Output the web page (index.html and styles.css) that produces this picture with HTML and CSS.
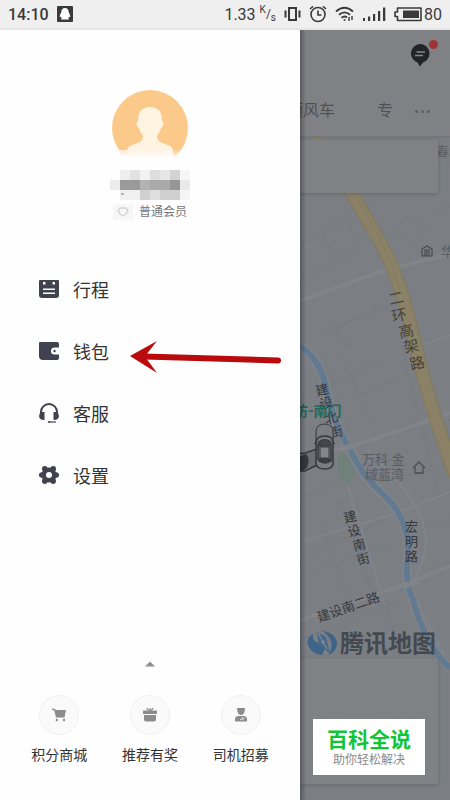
FILE: index.html
```html
<!DOCTYPE html>
<html lang="zh-CN">

<head>
  <meta charset="UTF-8">
  <meta name="viewport" content="width=device-width, initial-scale=1.0">
  <title>个人中心</title>
  <link rel="stylesheet" href="styles.css">
</head>

<body>
  <header class="status-bar">
    <div class="status-group">
      <span class="clock">14:10</span>
      <svg class="qq-icon" width="16" height="16" viewBox="0 0 16 16">
        <rect width="16" height="16" rx="1" fill="#3a3a3a" />
        <path d="M8 2C5.500 2 4.300 3.800 4.300 6.200C3.600 7.600 2.600 9.400 2.800 11.300L4 10.800L4.600 12.200L3.800 13.500H12.200L11.400 12.200L12 10.800L13.200 11.300C13.400 9.400 12.400 7.600 11.700 6.200C11.700 3.800 10.500 2 8 2Z" fill="#fff" />
      </svg>
    </div>
    <div class="status-group">
      <span class="speed">1.33<span class="speed-unit"><sup>K</sup>/<sub>s</sub></span></span>
      <svg width="17" height="16" viewBox="0 0 17 16" fill="none" stroke="#3a3a3a" stroke-width="2">
        <path d="M5 2H12V14H5ZM1.500 4.500V11.500M15.500 4.500V11.500" />
      </svg>
      <svg width="18" height="18" viewBox="0 0 18 18" fill="none" stroke="#3a3a3a" stroke-width="1.600">
        <circle cx="9" cy="9.500" r="7" />
        <path d="M9 5.500V10H12.500M1 4L4 1.300M17 4L14 1.300" />
      </svg>
      <svg width="20" height="18" viewBox="0 0 20 18" fill="none" stroke="#3a3a3a" stroke-width="1.800">
        <path d="M1 6.500Q9.500 -1 18 6.500M4 9.800Q9.500 5 15 9.800M6.500 12.800Q9.500 10.400 12 12.500" />
        <circle cx="9.500" cy="15" r="1" fill="#3a3a3a" stroke="none" />
        <path d="M14 12V16M17 11V15" stroke-width="1.400" />
      </svg>
      <svg width="23" height="16" viewBox="0 0 23 16" fill="#3a3a3a">
        <path d="M0 12H2V15H0ZM5 10.500H7.200V15H5ZM10 8H12.200V15H10ZM15 5H17.200V15H15ZM20 1.500H22.300V15H20Z" />
      </svg>
      <span class="battery">
        <svg width="28" height="16" viewBox="0 0 28 16">
          <path d="M3.500 2H27V14.500H3.500V10.500H1V6H3.500Z" fill="none" stroke="#3a3a3a" stroke-width="1.600" stroke-linejoin="round" />
          <rect x="9" y="4.500" width="16" height="7.500" fill="#3a3a3a" />
        </svg>
        80
      </span>
    </div>
  </header>

  <div class="screen">
    <aside class="drawer">
      <section class="profile">
        <svg class="avatar" viewBox="0 0 76 76">
          <defs>
            <linearGradient id="fade" x1="0" y1="0" x2="0" y2="1">
              <stop offset="0" stop-color="#fefefe" stop-opacity="0" />
              <stop offset="0.500" stop-color="#fefefe" stop-opacity="1" />
            </linearGradient>
          </defs>
          <circle cx="38" cy="38" r="38" fill="#fbca8b" />
          <path d="M38 17C30 17 26 22 26 29V31C24 31 24 36 27 38C28 42 30 44 31 46C31 52 26 53 20 55C17 56 15 58 15 61L15 76H61V61C61 58 59 56 56 55C50 53 45 52 45 46C46 44 48 42 49 38C52 36 52 31 50 31V29C50 22 46 17 38 17Z" fill="#fff3e2" />
          <path d="M8 60H15V66H8Z" fill="#fdebd4" />
          <rect y="60" width="76" height="16" fill="url(#fade)" />
        </svg>
        <svg class="masked-name" viewBox="0 0 80 30">
          <rect x="10" y="0" width="10" height="10" fill="#eeeeef" />
          <rect x="20" y="0" width="10" height="10" fill="#e2e2e3" />
          <rect x="30" y="0" width="10" height="10" fill="#f2f2f2" />
          <rect x="40" y="0" width="10" height="10" fill="#dededf" />
          <rect x="50" y="0" width="10" height="10" fill="#e7e7e8" />
          <rect x="60" y="0" width="10" height="10" fill="#d3d3d4" />
          <rect x="70" y="0" width="10" height="10" fill="#f6f6f6" />
          <rect x="0" y="10" width="10" height="10" fill="#ececec" />
          <rect x="10" y="10" width="20" height="10" fill="#9a9a9b" />
          <rect x="30" y="10" width="10" height="10" fill="#b3b3b4" />
          <rect x="40" y="10" width="20" height="10" fill="#aaaaab" />
          <rect x="60" y="10" width="10" height="10" fill="#969697" />
          <rect x="70" y="10" width="10" height="10" fill="#e9e9ea" />
          <rect x="10" y="20" width="20" height="10" fill="#f0f0f0" />
          <path d="M11 23H14V25H11Z" fill="#b5b5b5" />
          <rect x="30" y="20" width="10" height="10" fill="#d0d0d1" />
          <rect x="40" y="20" width="10" height="10" fill="#dedede" />
          <rect x="50" y="20" width="20" height="10" fill="#cfcfd0" />
          <rect x="70" y="20" width="10" height="10" fill="#f5f5f5" />
        </svg>
        <div class="member">
          <span class="member-badge">
            <svg width="12" height="10" viewBox="0 0 12 10" fill="none" stroke="#d4d4d4" stroke-width="1.500">
              <path d="M3 1H9L11 4L9 7L6 9L3 7L1 4Z" stroke-linejoin="round" />
            </svg>
          </span>
          <span>普通会员</span>
        </div>
      </section>

      <nav class="menu">
        <a class="menu-item" href="#trips">
          <svg class="menu-icon" viewBox="0 0 20 20">
            <path d="M0 2Q0 1 1 1H19Q20 1 20 2V16Q20 19 17 19H3Q0 19 0 16Z" fill="#41414f" />
            <path d="M4 3H6.500V5.500H4ZM13.500 3H16V5.500H13.500ZM4 9.500H16V11H4ZM4 13.500H16V15H4Z" fill="#fff" />
          </svg>
          行程
        </a>
        <a class="menu-item" href="#wallet">
          <svg class="menu-icon" viewBox="0 0 20 20">
            <path d="M1 1H18Q20 1 20 3V6.500H15.500A3.500 3.500 0 0 0 15.500 13.500H20V17Q20 19 18 19H4Q0 19 0 15V2Q0 1 1 1Z" fill="#41414f" />
            <circle cx="15.500" cy="10" r="1.200" fill="#41414f" />
          </svg>
          钱包
        </a>
        <a class="menu-item" href="#service">
          <svg class="menu-icon" viewBox="0 0 20 20">
            <path d="M2 11V9A8 8 0 0 1 18 9V11" fill="none" stroke="#41414f" stroke-width="2" />
            <path d="M1.500 9H5.500V17Q2 17.500 .5 15Q-.5 12 1.500 9ZM18.500 9H14.500V17Q18 17.500 19.500 15Q20.500 12 18.500 9Z" fill="#41414f" />
            <path d="M10 19H17" stroke="#41414f" stroke-width="1.200" />
            <circle cx="10" cy="19" r="1" fill="#41414f" />
          </svg>
          客服
        </a>
        <a class="menu-item" href="#settings">
          <svg class="menu-icon" viewBox="0 0 20 20" fill="#41414f">
            <circle cx="10" cy="10" r="7.500" />
            <circle cx="5.800" cy="3.900" r="2.800" />
            <circle cx="14.200" cy="3.900" r="2.800" />
            <circle cx="17.200" cy="10" r="2.800" />
            <circle cx="14.200" cy="16.100" r="2.800" />
            <circle cx="5.800" cy="16.100" r="2.800" />
            <circle cx="2.800" cy="10" r="2.800" />
            <circle cx="10" cy="10" r="3" fill="#fff" />
          </svg>
          设置
        </a>
      </nav>

      <footer class="drawer-footer">
        <button class="expand" type="button" aria-label="展开">
          <svg width="10" height="6" viewBox="0 0 10 6" fill="#8c8c8c">
            <path d="M5 0.500L10 5.500H0Z" />
          </svg>
        </button>
        <div class="shortcuts">
          <a class="shortcut" href="#mall">
            <span class="shortcut-icon">
              <svg width="16" height="14" viewBox="0 0 16 14" fill="#8c8c8c">
                <path d="M1 .5L4 1L4.600 2H15L13.500 9.500H5L3.200 2.300L1 2Z" />
                <circle cx="5.800" cy="12" r="1.200" />
                <circle cx="13" cy="12" r="1.200" />
              </svg>
            </span>
            积分商城
          </a>
          <a class="shortcut" href="#invite">
            <span class="shortcut-icon">
              <svg width="16" height="14" viewBox="0 0 16 14" fill="#8c8c8c">
                <path d="M1 2.500H15V6H1ZM2 7H14V11.500Q14 13.500 12 13.500H4Q2 13.500 2 11.500Z" />
                <path d="M4.500 0L8 3.500L11.500 0M8 0V3" fill="none" stroke="#8c8c8c" stroke-width="1.200" />
              </svg>
            </span>
            推荐有奖
          </a>
          <a class="shortcut" href="#driver">
            <span class="shortcut-icon">
              <svg width="16" height="14" viewBox="0 0 16 14" fill="#8c8c8c">
                <path d="M4 0H12L11.500 4Q10.500 7 8 7Q5.500 7 4.500 4ZM2 13.500V11Q2 8.500 5 8H11Q14 8.500 14 11V13.500Z" />
                <path d="M7 12L10 9.500M9 12L11.500 10" stroke="#eee" />
              </svg>
            </span>
            司机招募
          </a>
        </div>
      </footer>

      <svg class="arrow" width="152" height="36" viewBox="0 0 152 36">
        <path d="M14 16.500L148 20.500" stroke="#b90a0e" stroke-width="6" stroke-linecap="round" />
        <path d="M0 16L27 1L16 15V18L27 33Z" fill="#b90a0e" />
      </svg>
    </aside>

    <main class="map-view">
      <svg class="map" viewBox="300 30 150 770" preserveAspectRatio="xMinYMin slice">
        <rect x="300" y="30" width="400" height="1000" fill="#7b7e83" />
        <!-- minor streets -->
        <g fill="none" stroke="#777a7f" stroke-width="1">
          <path d="M300 245L378 195M322 235L345 222L360 245L338 258ZM300 280L350 255M352 238L372 228M394 230L410 216L426 228L412 245ZM432 215L450 206M335 328L400 300M336 328L350 348M325 330L395 304M375 182L450 160" />
          <path d="M322 355L350 430M340 350L372 425M300 400L380 360M350 400L400 376M355 445L420 420M400 340L440 500M300 498L345 480M420 430L450 420" />
          <path d="M300 575L390 545M300 560L385 520M320 520L352 610M390 480L450 465M418 530L450 520M385 600L398 650M300 640L400 600M430 570L450 562M340 500L372 590" />
        </g>
        <!-- main streets -->
        <g fill="none" stroke="#818489" stroke-width="4">
          <path d="M300 301L385 270L450 254" />
          <path d="M300 455L350 447L430 420L450 413" />
          <path d="M300 542L400 512L450 492" stroke-width="2" />
          <path d="M300 620L398 587L450 566" />
          <path d="M338 455L385 605" stroke-width="2" />
          <path d="M368 450Q410 490 422 520T410 585" stroke-width="2" />
          <path d="M425 345L450 335M410 590L445 655" stroke-width="2" />
        </g>
        <path d="M338 453H350L355 474L348 485L338 475Z" fill="#70807a" />
        <!-- river -->
        <path d="M300 346Q321 360 326 388T350 450Q362 476 385 496Q410 520 408 555Q404 580 413 600Q425 645 450 668" fill="none" stroke="#81868c" stroke-width="9" />
        <path d="M300 346Q321 360 326 388T350 450Q362 476 385 496Q410 520 408 555Q404 580 413 600Q425 645 450 668" fill="none" stroke="#62798f" stroke-width="6" />
        <path d="M343 449L352 446" stroke="#818489" stroke-width="6" />
        <path d="M404 586L418 581" stroke="#818489" stroke-width="6" />
        <!-- elevated road -->
        <path d="M315 136Q345 180 376 235Q400 275 413 335T455 475" fill="none" stroke="#837a62" stroke-width="14" />
        <path d="M315 136Q345 180 376 235Q400 275 413 335T455 475" fill="none" stroke="#8a8167" stroke-width="11" />
        <path d="M350 187Q385 238 400 290" fill="none" stroke="#847b60" stroke-width="1" />

        <text class="road-name" rotate="-12" x="390 393 400 405 411" y="305 322 338 353 370">二环高架路</text>
        <g class="street-name">
          <text rotate="-14" x="317 321 326 331" y="396 409 424 438">建设北街</text>
          <text rotate="-14" x="345 349 354 358" y="523 537 551 565">建设南街</text>
          <text x="405 405 405" y="531 546 561">宏明路</text>
          <text transform="translate(319 622) rotate(-19)">建设南二路</text>
        </g>
        <text class="pickup" x="294" y="416">访-南门</text>
        <g class="place-name">
          <text x="362" y="464">万科·金</text>
          <text x="365" y="479">域蓝湾</text>
          <text x="441" y="256">华</text>
          <text x="436" y="156">春木</text>
        </g>
        <path d="M413 468L419 462L425 468M415 467V473H423V467" fill="none" stroke="#4c4e52" stroke-width="1.300" />
        <path d="M422 249L427 246L432 249V256H422ZM425 249V256M427 249V256M429 249V256" fill="none" stroke="#494b4f" stroke-width="1.200" />

        <!-- cars -->
        <g fill="#6c6f73" stroke="#37393d" stroke-width="1.500">
          <path d="M296 457Q298 453 305 453L317 449V465L305 471H296Z" />
          <path d="M300 457L306 455Q310 460 306 468L300 471Z" fill="#36383c" />
        </g>
        <g fill="#7a7d81" stroke="#37393d" stroke-width="1">
          <path d="M316 445V432Q316 424 325 424Q333 424 333 432V445Z" />
          <path d="M316 443Q316 436 325 436Q333 436 333 443V463Q333 469 325 469Q316 469 316 463Z" stroke-width="1.500" />
          <path d="M318 442Q325 437 331 442L330 446H319Z" fill="#45474b" />
          <path d="M320 447H329V458H320Z" fill="#85878b" />
          <path d="M319 461L320 459H329L331 461Q325 465 319 461ZM318 444V460M331 444V460" fill="#3d3f43" stroke-width="1.500" />
          <path d="M314 444L316 442M335 444L333 442" />
        </g>

        <!-- map provider logo -->
        <path d="M313 634Q306 638 308 645Q311 654 322 655L325 648L319 643Q312 642 313 634Z" fill="#3e6487" />
        <path d="M323 631Q336 633 337 643Q337 652 328 655L331 649Q334 640 323 631Z" fill="#3e6487" />
        <path d="M317 632L326 637L330 653L319 645Z" fill="#46698a" />
        <path d="M318 633L327 649" stroke="#8a949e" stroke-width="1" />
        <circle cx="323" cy="642" r="1.500" fill="#8a949e" />
        <text class="provider" x="340" y="652">腾讯地图</text>
      </svg>

      <div class="app-header">
        <button class="messages" type="button" aria-label="消息">
          <svg width="20" height="23" viewBox="0 0 20 23">
            <path d="M10 0A9.500 9.500 0 0 1 13 18.500L10 22.500L7.500 18.500A9.500 9.500 0 0 1 10 0Z" fill="#232428" />
            <path d="M6.500 8H15M5 11.500H13" stroke="#84868a" stroke-width="1.300" />
          </svg>
          <span class="unread"></span>
        </button>
        <nav class="tabs">
          <a class="tab tab-cut" href="#ride">顺风车</a>
          <a class="tab" href="#premier">专</a>
          <a class="tab-more" href="#more" aria-label="更多"><i></i><i></i><i></i></a>
        </nav>
      </div>
      <div class="notice-card"></div>
      <div class="order-card"></div>

      <div class="watermark">
        <strong>百科全说</strong>
        <span>助你轻松解决</span>
      </div>
    </main>
  </div>
</body>

</html>
```

FILE: styles.css
```css
* {
  margin: 0;
  padding: 0;
  box-sizing: border-box;
}

body {
  font-family: Roboto, 'Noto Sans CJK SC', sans-serif;
  background: #fefefe;
  color: #333;
  min-height: 100vh;
  display: flex;
  flex-direction: column;
}

a {
  color: inherit;
  text-decoration: none;
}

button {
  background: none;
  border: none;
}

svg {
  display: block;
}

.status-bar {
  display: flex;
  justify-content: space-between;
  align-items: center;
  height: 30px;
  padding: 0 8px;
  background: #efefef;
  border-bottom: 2px solid #e6e6e6;
  color: #3a3a3a;
  font-size: 16px;
}

.status-group {
  display: flex;
  align-items: center;
  gap: 8px;
}

.clock {
  font-weight: 500;
}

.speed {
  display: flex;
  align-items: center;
  gap: 4px;
}

.speed-unit {
  font-size: 12px;
  line-height: 16px;
}

.speed-unit sup,
.speed-unit sub {
  font-size: 10px;
  line-height: 1;
}

.battery {
  display: flex;
  align-items: center;
  gap: 2px;
}

.screen {
  flex: 1;
  display: grid;
  grid-template-columns: 2fr 1fr;
}

.drawer {
  position: relative;
  display: flex;
  flex-direction: column;
  padding-top: 60px;
  background: #fefefe;
}

.profile {
  display: flex;
  flex-direction: column;
  align-items: center;
}

.avatar {
  width: 76px;
  height: 76px;
}

.masked-name {
  width: 80px;
  height: 30px;
  margin-top: 4px;
}

.member {
  display: flex;
  align-items: center;
  gap: 6px;
  margin-top: 4px;
  font-size: 12px;
  line-height: 16px;
  color: #777;
}

.member-badge {
  padding: 3px 4px;
  background: #f7f7f7;
}

.menu {
  display: flex;
  flex-direction: column;
  margin-top: 38px;
}

.menu-item {
  display: flex;
  align-items: center;
  gap: 14px;
  height: 62px;
  padding-left: 39px;
  font-size: 18px;
  color: #333;
}

.menu-icon {
  width: 20px;
  height: 20px;
}

.drawer-footer {
  display: flex;
  flex-direction: column;
  gap: 28px;
  margin-top: auto;
  padding: 0 14px 35px;
}

.expand {
  align-self: center;
}

.shortcuts {
  display: grid;
  grid-template-columns: repeat(3, 1fr);
}

.shortcut {
  display: flex;
  flex-direction: column;
  align-items: center;
  gap: 10px;
  font-size: 14px;
  line-height: 20px;
}

.shortcut-icon {
  display: flex;
  align-items: center;
  justify-content: center;
  width: 40px;
  height: 40px;
  border: 1px solid #f0f0f0;
  border-radius: 50%;
  background: #fafafa;
}

.arrow {
  position: absolute;
  top: 310px;
  left: 130px;
}

.map-view {
  position: relative;
  display: flex;
  flex-direction: column;
  overflow: hidden;
  background: #7b7e83;
}

.map {
  position: absolute;
  top: 0;
  left: 0;
  width: 100%;
  height: 100%;
}

.road-name {
  font-size: 15px;
  fill: #4b4339;
}

.street-name {
  font-size: 13px;
  fill: #36383c;
}

.place-name {
  font-size: 13px;
  fill: #5a5c60;
}

.pickup {
  font-size: 14px;
  font-weight: bold;
  fill: #24675a;
}

.provider {
  font-size: 24px;
  font-weight: bold;
  fill: #444950;
}

.app-header {
  position: relative;
  display: flex;
  flex-direction: column;
  justify-content: space-between;
  height: 108px;
  padding: 14px 20px 13px 0;
  background: #808184;
  border-bottom: 2px solid #747679;
}

.messages {
  position: relative;
  align-self: flex-end;
}

.unread {
  position: absolute;
  top: -4px;
  right: -8px;
  width: 9px;
  height: 9px;
  border-radius: 50%;
  background: #9f3438;
}

.tabs {
  display: flex;
  align-items: center;
  justify-content: flex-end;
  gap: 22px;
  font-size: 16px;
  line-height: 24px;
  color: #505155;
}

.tab {
  white-space: nowrap;
}

.tab-cut {
  margin-right: 20px;
}

.tab-more {
  display: flex;
  gap: 3px;
}

.tab-more i {
  width: 3px;
  height: 3px;
  border-radius: 50%;
  background: #5b5d60;
}

.notice-card,
.order-card {
  position: relative;
  margin-right: 12px;
  background: #808184;
  box-shadow: 0 1px 4px rgba(0, 0, 0, 0.2);
}

.notice-card {
  height: 53px;
  margin-top: 2px;
}

.order-card {
  height: 126px;
  margin-top: auto;
  margin-bottom: 16px;
}

/* edge shadow that the drawer throws on the map */
.map-view::after {
  content: '';
  position: absolute;
  top: 0;
  bottom: 0;
  left: 0;
  width: 6px;
  background: linear-gradient(to right, rgba(0, 0, 0, 0.3), transparent);
}

.watermark {
  position: absolute;
  right: 25px;
  bottom: 25px;
  display: flex;
  flex-direction: column;
  align-items: center;
  padding: 8px 14px;
  background: #fff;
  font-size: 12px;
  line-height: 14px;
  color: #888;
  white-space: nowrap;
}

.watermark strong {
  font-size: 21px;
  line-height: 26px;
  color: #11c636;
}
```
